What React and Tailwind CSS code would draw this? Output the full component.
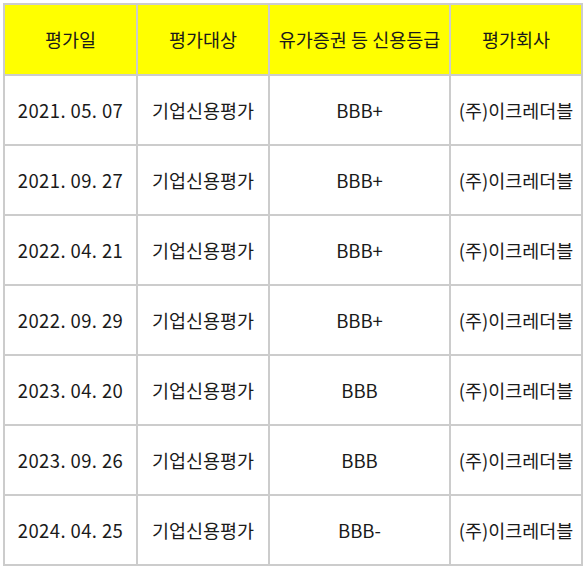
import React from "react";

const rows = [
  ["2021. 05. 07", "기업신용평가", "BBB+", "(주)이크레더블"],
  ["2021. 09. 27", "기업신용평가", "BBB+", "(주)이크레더블"],
  ["2022. 04. 21", "기업신용평가", "BBB+", "(주)이크레더블"],
  ["2022. 09. 29", "기업신용평가", "BBB+", "(주)이크레더블"],
  ["2023. 04. 20", "기업신용평가", "BBB", "(주)이크레더블"],
  ["2023. 09. 26", "기업신용평가", "BBB", "(주)이크레더블"],
  ["2024. 04. 25", "기업신용평가", "BBB-", "(주)이크레더블"],
];

const headers = ["평가일", "평가대상", "유가증권 등 신용등급", "평가회사"];

export default function App() {
  return (
    <div className="w-[585px] h-[569px] bg-white pt-[3px] pl-[3px]">
      <div
        className="grid w-[580px] grid-cols-[131px_130px_179px_130px] grid-rows-[69px_repeat(7,68px)] gap-[2px] border-2 border-[#cccccc] bg-[#cccccc] text-[18.5px] text-[#1a1a1a]"
        style={{ fontFamily: '"Noto Sans CJK KR", "Noto Sans", sans-serif' }}
      >
        {headers.map((h) => (
          <div key={h} className="flex items-center justify-center bg-[#ffff00] leading-none">
            {h}
          </div>
        ))}
        {rows.map((r, i) =>
          r.map((c, j) => (
            <div
              key={i + "-" + j}
              className={
                "flex items-center justify-center bg-white leading-none" +
                (j === 0 ? " tracking-[0.4px]" : "")
              }
            >
              {c}
            </div>
          ))
        )}
      </div>
    </div>
  );
}
